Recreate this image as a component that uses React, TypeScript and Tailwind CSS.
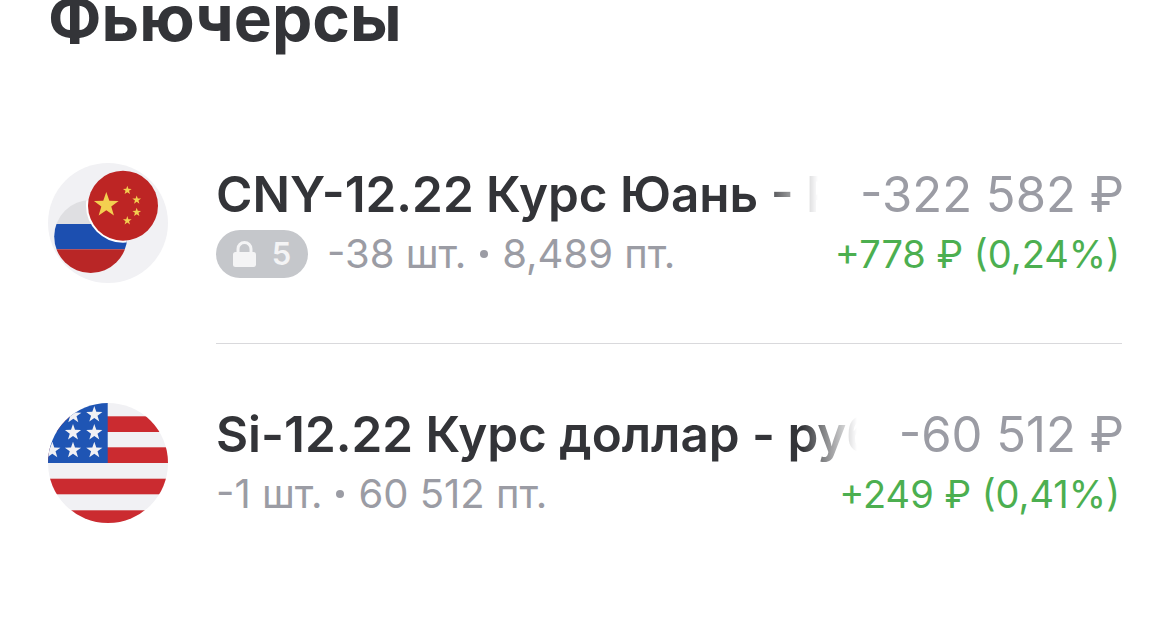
function star(cx: number, cy: number, r: number) {
  const pts: string[] = []
  for (let i = 0; i < 10; i++) {
    const rad = i % 2 === 0 ? r : r * 0.4
    const a = (Math.PI / 5) * i - Math.PI / 2
    pts.push(`${(cx + rad * Math.cos(a)).toFixed(2)},${(cy + rad * Math.sin(a)).toFixed(2)}`)
  }
  return pts.join(' ')
}

function PairIcon() {
  return (
    <svg width="120" height="120" viewBox="0 0 120 120" className="shrink-0">
      <defs>
        <clipPath id="ru">
          <circle cx="42.7" cy="73.5" r="36.5" />
        </clipPath>
      </defs>
      <circle cx="60" cy="60" r="60" fill="#f1f1f4" />
      <g clipPath="url(#ru)">
        <rect x="0" y="36" width="90" height="25" fill="#dfdfe2" />
        <rect x="0" y="61" width="90" height="25.3" fill="#1c4fb0" />
        <rect x="0" y="86.3" width="90" height="26" fill="#b92626" />
        <circle cx="75" cy="42.7" r="37" fill="#ffffff" />
      </g>
      <circle cx="75" cy="42.7" r="35" fill="#bd2524" />
      <polygon points={star(58.3, 42, 13)} fill="#f3cf50" />
      <polygon points={star(79.3, 27.3, 4.6)} fill="#f3cf50" />
      <polygon points={star(88.7, 37, 4.6)} fill="#f3cf50" />
      <polygon points={star(88.7, 49.3, 4.6)} fill="#f3cf50" />
      <polygon points={star(79.3, 57.7, 4.6)} fill="#f3cf50" />
    </svg>
  )
}

function UsIcon() {
  const stars = [
    [46.3, 11.6], [25.3, 12.3], [25, 29.6], [46.3, 29.6], [25, 47.3], [46.3, 47.3], [4.3, 47.3],
  ]
  return (
    <svg width="120" height="120" viewBox="0 0 120 120" className="shrink-0">
      <defs>
        <clipPath id="us">
          <circle cx="60" cy="60" r="60" />
        </clipPath>
      </defs>
      <g clipPath="url(#us)">
        <rect width="120" height="120" fill="#f1f1f4" />
        <rect x="0" y="13.3" width="120" height="15.7" fill="#cb2b30" />
        <rect x="0" y="44.3" width="120" height="15.7" fill="#cb2b30" />
        <rect x="0" y="75.7" width="120" height="15.6" fill="#cb2b30" />
        <rect x="0" y="107.3" width="120" height="13" fill="#cb2b30" />
        <rect x="0" y="0" width="59.7" height="60" fill="#1f55b4" />
        {stars.map(([x, y]) => (
          <polygon key={`${x}-${y}`} points={star(x, y, 8.5)} fill="#f1f1f4" />
        ))}
      </g>
    </svg>
  )
}

function LockIcon() {
  return (
    <svg width="23" height="26" viewBox="0 0 23 26">
      <path d="M5 12V8a6.5 6.5 0 0 1 13 0v4" fill="none" stroke="#f4f4f5" strokeWidth="3" />
      <rect x="0" y="11" width="23" height="15" rx="2.5" fill="#f4f4f5" />
    </svg>
  )
}

function Dot() {
  return <span className="mx-[14px] inline-block size-[8px] rounded-full bg-[#9b9ca4]" />
}

interface RowProps {
  icon: React.ReactNode
  name: string
  meta: React.ReactNode
  value: string
  change: string
}

function Row({ icon, name, meta, value, change }: RowProps) {
  return (
    <div className="flex h-[120px] items-center gap-[48px]">
      {icon}
      <div className="min-w-0 flex-1">
        <div className="flex h-[60px] items-center pt-[3px]">
          <div className="mr-[42px] min-w-0 flex-1 overflow-hidden whitespace-nowrap text-[49.4px] font-semibold text-[#333438] [mask-image:linear-gradient(to_left,transparent_0px,black_55px)]">
            {name}
          </div>
          <div className="-mr-[2px] shrink-0 text-[49px] text-[#9b9ca4]">{value}</div>
        </div>
        <div className="mt-[2px] flex h-[58px] items-center justify-between whitespace-nowrap">
          <div className="flex items-center text-[40px] text-[#9b9ca4]">{meta}</div>
          <div className="pr-[2px] text-[38px] text-[#4caf50]">{change}</div>
        </div>
      </div>
    </div>
  )
}

export default function App() {
  return (
    <div className="h-[634px] w-[1170px] overflow-hidden bg-white px-[48px] font-['Inter',sans-serif]">
      <h1 className="-mt-[18px] text-[64px] leading-[72px] font-bold text-[#333438]">Фьючерсы</h1>
      <div className="mt-[109px]">
        <Row
          icon={<PairIcon />}
          name="CNY-12.22 Курс Юань - Рубль"
          value="-322 582 ₽"
          change="+778 ₽ (0,24%)"
          meta={
            <>
              <span className="mr-[19px] flex h-[48px] w-[92px] shrink-0 items-center justify-center gap-[16px] rounded-full bg-[#c5c7cb] text-[31px] font-semibold text-[#f4f4f5]">
                <LockIcon />5
              </span>
              -38 шт.
              <Dot />
              8,489 пт.
            </>
          }
        />
        <div className="mt-[60px] ml-[168px] border-t border-[#d9d9dc]" />
        <div className="mt-[59px]">
          <Row
            icon={<UsIcon />}
            name="Si-12.22 Курс доллар - рубль"
            value="-60 512 ₽"
            change="+249 ₽ (0,41%)"
            meta={
              <>
                -1 шт.
                <Dot />
                60 512 пт.
              </>
            }
          />
        </div>
      </div>
    </div>
  )
}
